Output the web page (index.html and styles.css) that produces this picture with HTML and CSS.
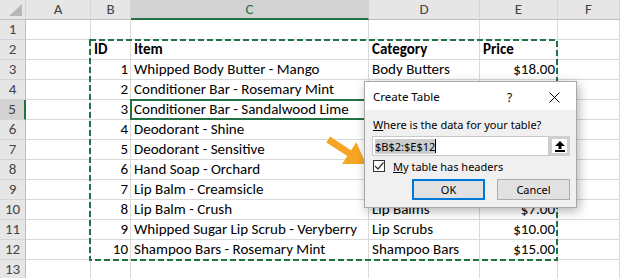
FILE: index.html
```html
<!DOCTYPE html>
<html lang="en">

<head>
    <meta charset="UTF-8">
    <title>Create Table</title>
    <link rel="stylesheet" href="styles.css">
</head>

<body>
    <div class="sheet">
        <!--column headers-->
        <div class="row head">
            <div class="corner"><svg width="14" height="13" viewBox="0 0 14 13"><polygon points="13,0 13,12 0,12" fill="#b7b7b7"/></svg></div>
            <div>A</div>
            <div>B</div>
            <div class="sel-col">C</div>
            <div>D</div>
            <div>E</div>
            <div>F</div>
        </div>
        <div class="row">
            <div class="rh">1</div><div></div><div></div><div></div><div></div><div></div><div></div>
        </div>
        <div class="row bold">
            <div class="rh">2</div><div></div><div>ID</div><div>Item</div><div>Category</div><div>Price</div><div></div>
        </div>
        <div class="row">
            <div class="rh">3</div><div></div><div class="num">1</div><div>Whipped Body Butter - Mango</div><div>Body Butters</div><div class="num">$18.00</div><div></div>
        </div>
        <!--D and E of rows 4-9 sit under the dialog-->
        <div class="row">
            <div class="rh">4</div><div></div><div class="num">2</div><div>Conditioner Bar - Rosemary Mint</div><div></div><div></div><div></div>
        </div>
        <div class="row">
            <div class="rh sel-row">5</div><div></div><div class="num">3</div><div class="active">Conditioner Bar - Sandalwood Lime</div><div></div><div></div><div></div>
        </div>
        <div class="row">
            <div class="rh">6</div><div></div><div class="num">4</div><div>Deodorant - Shine</div><div></div><div></div><div></div>
        </div>
        <div class="row">
            <div class="rh">7</div><div></div><div class="num">5</div><div>Deodorant - Sensitive</div><div></div><div></div><div></div>
        </div>
        <div class="row">
            <div class="rh">8</div><div></div><div class="num">6</div><div>Hand Soap - Orchard</div><div></div><div></div><div></div>
        </div>
        <div class="row">
            <div class="rh">9</div><div></div><div class="num">7</div><div>Lip Balm - Creamsicle</div><div></div><div></div><div></div>
        </div>
        <div class="row">
            <div class="rh">10</div><div></div><div class="num">8</div><div>Lip Balm - Crush</div><div>Lip Balms</div><div class="num">$7.00</div><div></div>
        </div>
        <div class="row">
            <div class="rh">11</div><div></div><div class="num">9</div><div>Whipped Sugar Lip Scrub - Veryberry</div><div>Lip Scrubs</div><div class="num">$10.00</div><div></div>
        </div>
        <div class="row">
            <div class="rh">12</div><div></div><div class="num">10</div><div>Shampoo Bars - Rosemary Mint</div><div>Shampoo Bars</div><div class="num">$15.00</div><div></div>
        </div>
        <div class="row">
            <div class="rh">13</div><div></div><div></div><div></div><div></div><div></div><div></div>
        </div>

        <!--copy range marquee-->
        <svg class="ants" width="469" height="222">
            <rect x="1" y="1" width="467" height="220" fill="none" stroke="#217346" stroke-width="2" stroke-dasharray="6 3"/>
        </svg>

        <!--callout arrow-->
        <svg class="arrow" width="50" height="40" viewBox="322 132 50 40">
            <polygon points="326.3,142.4 330.1,136.6 351.1,150.2 356.3,142.2 366,164 342.1,164 347.3,156" fill="#f6a623"/>
        </svg>

        <div class="dialog">
            <div class="title">
                <span class="caption">Create Table</span>
                <span class="help">?</span>
                <svg class="close" width="11" height="11" viewBox="0 0 11 11">
                    <path d="M0.5 0.5 L10.5 10.5 M10.5 0.5 L0.5 10.5" stroke="#000" stroke-width="1"/>
                </svg>
            </div>
            <div class="body">
                <div class="prompt"><u>W</u>here is the data for your table?</div>
                <div class="field">
                    <div class="input"><span class="picked">$B$2:$E$12</span><span class="caret"></span></div>
                    <div class="collapse">
                        <svg width="10" height="11" viewBox="0 0 10 11">
                            <polygon points="5,0 10,5 6.5,5 6.5,8 3.5,8 3.5,5 0,5" fill="#000"/>
                            <rect x="0" y="9" width="10" height="2" fill="#000"/>
                        </svg>
                    </div>
                </div>
                <div class="check">
                    <span class="box">
                        <svg width="10" height="10" viewBox="0 0 10 10"><path d="M1 5 L4 8 L9.5 1.5" fill="none" stroke="#333" stroke-width="1.2"/></svg>
                    </span>
                    <span><u>M</u>y table has headers</span>
                </div>
                <div class="buttons">
                    <div class="btn ok">OK</div>
                    <div class="btn">Cancel</div>
                </div>
            </div>
        </div>
    </div>
</body>

</html>
```

FILE: styles.css
```css
html,
body {
    margin: 0;
    background: #fff;
}

.sheet {
    position: relative;
    width: 620px;
    height: 278px;
    overflow: hidden;
    font-family: Calibri, Carlito, Lato, sans-serif;
}

.row {
    display: grid;
    grid-template-columns: 26px 65px 40px 238px 111px 78px 1fr;
    height: 20px;
}

.row>div {
    box-sizing: border-box;
    border-right: 1px solid #dadada;
    border-bottom: 1px solid #dadada;
    font-size: 15px;
    line-height: 19px;
    padding: 0 2px 0 3px;
    white-space: nowrap;
    overflow: hidden;
    color: #000;
    position: relative;
}

.bold>div {
    font-weight: bold;
}

.num {
    text-align: right;
}

.head>div,
.row>.rh {
    background: #e6e6e6;
    color: #444;
    text-align: center;
    font-weight: normal;
    padding: 0;
    border-color: #c8c8c8;
}

.head>div {
    border-right-color: #d4d4d4;
    border-bottom-color: #bdbdbd;
}

.row>.rh {
    border-bottom-color: #d4d4d4;
    border-right-color: #bdbdbd;
}

.head>.corner {
    display: flex;
    align-items: flex-end;
    justify-content: flex-end;
    padding: 0 2px 2px 0;
}

.head>.sel-col {
    background: #d2d2d2;
    color: #217346;
    border-bottom: 2px solid #217346;
}

.row>.sel-row {
    background: #d2d2d2;
    border-right: 2px solid #217346;
}

.active {
    overflow: visible !important;
}

.active::after {
    content: '';
    position: absolute;
    left: -1px;
    top: -1px;
    right: -1px;
    bottom: -1px;
    border: 2px solid #217346;
}

.ants {
    position: absolute;
    left: 89px;
    top: 39px;
}

.arrow {
    position: absolute;
    left: 322px;
    top: 132px;
}

/*dialog*/
.dialog {
    position: absolute;
    left: 364px;
    top: 81px;
    width: 213px;
    height: 127px;
    box-sizing: border-box;
    background: #f0f0f0;
    border: 1px solid #a8a8a8;
    box-shadow: 2px 3px 10px rgba(0, 0, 0, 0.3);
    font-family: "Segoe UI", "Noto Sans", sans-serif;
    font-size: 11px;
    color: #000;
}

.title {
    height: 28px;
    background: #fff;
    display: flex;
    align-items: center;
    position: relative;
}

.caption {
    margin-left: 8px;
    font-size: 11.5px;
}

.help {
    position: absolute;
    left: 142px;
    top: 7px;
    font-size: 12px;
}

.close {
    position: absolute;
    left: 184px;
    top: 10px;
}

.body {
    display: flex;
    flex-direction: column;
    padding: 7px 6px 0 7px;
}

.prompt {
    line-height: 16px;
    margin-left: 1px;
}

.field {
    display: flex;
    margin-top: 3px;
    height: 20px;
}

.input {
    width: 178px;
    box-sizing: border-box;
    background: #fff;
    border: 1px solid #c8c8c8;
    display: flex;
    align-items: center;
    padding-left: 2px;
}

.picked {
    background: #cccccc;
    line-height: 15px;
}

.caret {
    width: 1px;
    height: 14px;
    background: #000;
}

.collapse {
    width: 21px;
    box-sizing: border-box;
    border: 3px solid #cfcfcf;
    background: #fff;
    display: flex;
    align-items: center;
    justify-content: center;
}

.check {
    display: flex;
    align-items: center;
    gap: 8px;
    margin-top: 4px;
    height: 12px;
    margin-left: 1px;
}

.box {
    width: 12px;
    height: 12px;
    box-sizing: border-box;
    border: 1px solid #333;
    background: #fff;
    display: flex;
    align-items: center;
    justify-content: center;
}

.buttons {
    display: flex;
    justify-content: flex-end;
    gap: 12px;
    margin-top: 7px;
}

.btn {
    width: 73px;
    height: 21px;
    box-sizing: border-box;
    background: #e1e1e1;
    border: 1px solid #adadad;
    text-align: center;
    line-height: 19px;
}

.btn.ok {
    border: 2px solid #0078d7;
    line-height: 17px;
}
```
